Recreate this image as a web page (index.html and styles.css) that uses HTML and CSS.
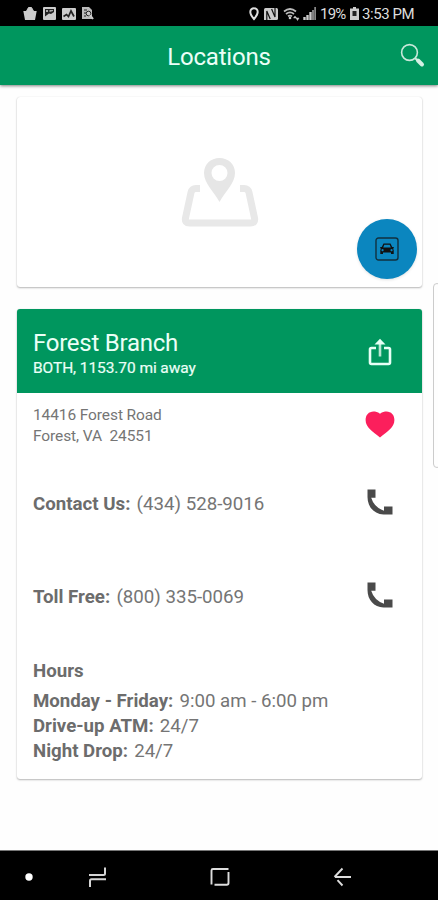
FILE: index.html
```html
<!DOCTYPE html>
<html lang="en">
<head>
<meta charset="utf-8">
<title>Locations</title>
<link rel="stylesheet" href="styles.css">
</head>
<body>
<div class="status">
  <div class="notices">
    <svg width="14" height="15" viewBox="0 0 14 15"><path d="M.3 5h13.400L12 14H2z" fill="#ccc"/><path d="M3 6l2.500-4.500h3L11 6" fill="#ccc" stroke="#ccc"/></svg>
    <svg width="13" height="13" viewBox="0 0 13 13"><rect width="13" height="13" rx="1" fill="#ccc"/><path d="M2 2v7.500l4-3 2 .5 3-2V2z" fill="#222"/><path d="M3 3h2v2H3zM6.500 3H10v1L6.500 5z" fill="#aaa"/></svg>
    <svg width="14" height="12" viewBox="0 0 14 12"><rect width="14" height="12" rx="1" fill="#ccc"/><path d="M1.500 8.500l3-2 2 2L9 3l3 5.500" fill="none" stroke="#222" stroke-width="1.700"/></svg>
    <svg width="12" height="13" viewBox="0 0 12 13"><path d="M0 0h7l3 3v9H0z" fill="#bbb"/><path d="M2 3h3M2 6h2M2 9h2" stroke="#222"/><circle cx="6.500" cy="6.500" r="2.300" fill="#ccc" stroke="#222"/><path d="M8 8l3 4" stroke="#ccc" stroke-width="2"/></svg>
  </div>
  <div class="signals">
    <svg class="s-pin" width="10" height="14" viewBox="0 0 10 14"><path d="M5 1.200a3.700 3.700 0 0 0-3.700 3.700C1.300 7.500 5 12 5 12s3.700-4.500 3.700-7.100A3.700 3.700 0 0 0 5 1.200z" fill="none" stroke="#ddd" stroke-width="2"/></svg>
    <svg class="s-nfc" width="14" height="12" viewBox="0 0 14 12"><path d="M0 12V1.500Q0 0 1.500 0h11Q14 0 14 1.500v9q0 1.500-1.500 1.500z" fill="#ccc"/><path d="M2.800 12V3l3.400 8M11 0v9L7.600 1" fill="none" stroke="#111" stroke-width="1.200"/></svg>
    <svg class="s-wifi" width="17" height="14" viewBox="0 0 17 14"><path d="M1 4.500Q7 -.5 13 4.500M3 7Q7 3.700 11 7M5 9.300q2-1.500 4 0" fill="none" stroke="#bbb" stroke-width="1.700"/><circle cx="7" cy="11" r="1.300" fill="#ccc"/><path d="M10.500 11l1.500-2 1.500 2zM13 11l1.500 2.500L16 11z" fill="#ccc" stroke="#ccc" stroke-width=".5"/></svg>
    <svg class="s-cell" width="13" height="13" viewBox="0 0 13 13"><path d="M1.500 13v-3M4.500 13V8M7.500 13V5" stroke="#ccc" stroke-width="2.400"/><path d="M10 13V3M12.200 13V0" stroke="#888" stroke-width="1.900"/></svg>
    <span class="pct">19%</span>
    <svg class="s-bat" width="9" height="13" viewBox="0 0 9 13"><path d="M3 0h3v1.500h3V13H0V1.500h3z" fill="#ccc"/><path d="M2.500 4h4v5h-4z" fill="#222"/></svg>
    <span class="clock">3:53 PM</span>
  </div>
</div>
<header class="bar">
  <h1>Locations</h1>
  <svg class="search" width="26" height="26" viewBox="0 0 26 26"><circle cx="9.500" cy="9.500" r="7.900" fill="none" stroke="#c8e8da" stroke-width="1.600"/><path d="M15 15l3 3" stroke="#c8e8da" stroke-width="2"/><path d="M18 17.500l4 4" stroke="#d5f0e4" stroke-width="4" stroke-linecap="round"/></svg>
</header>
<main>
  <section class="map">
    <svg width="78" height="70" viewBox="0 0 78 70"><path fill-rule="evenodd" d="M38.500 1C29.500 1 23 7.500 23 16c0 10 9.500 18 15.500 29C44.500 34 54 26 54 16 54 7.500 47.500 1 38.500 1zm0 7a8 8 0 1 1 0 16 8 8 0 0 1 0-16z" fill="#e6e6e6"/><path d="M19 31.500h-4q-4 0-5 4L4.500 61q-1 5 4 5h61q5 0 4-5L68 35.500q-1-4-5-4h-4" fill="none" stroke="#e8e8e8" stroke-width="7"/></svg>
    <button class="fab" aria-label="Directions"><svg width="24" height="24" viewBox="0 0 24 24"><rect x="1" y="1" width="22" height="22" rx="2.500" fill="none" stroke="#12313f" stroke-width="1.400"/><path fill-rule="evenodd" d="M8.500 6.500h7l1.700 3.500h1.300l.5 1-1 .7.700 1.300v4h-2.700v-1.500H8V17H5.300v-4l.7-1.300-1-.7.500-1h1.300zM9.300 7.800L8.200 10.500h7.600l-1.100-2.700zM7.500 12a1.100 1.100 0 1 0 .1 0zm9 0a1.100 1.100 0 1 0 .1 0z" fill="#111"/></svg></button>
  </section>
  <section class="branch">
    <div class="head">
      <div><h2>Forest Branch</h2><p class="dist">BOTH, 1153.70 mi away</p></div>
      <svg width="24" height="29" viewBox="0 0 24 29"><path d="M8 10H3.500Q2 10 2 11.500v13Q2 26 3.500 26h17q1.500 0 1.500-1.500v-13Q22 10 20.500 10H16" fill="none" stroke="#e6fff5" stroke-width="2.600"/><path d="M12 18.500V5" stroke="#b9e6d3" stroke-width="2.600"/><path d="M6.500 6.500L12 .8l5.500 5.700z" fill="#e6fff5"/></svg>
    </div>
    <div class="addr">
      <p>14416 Forest Road<br>Forest, VA&nbsp; 24551</p>
      <svg width="30" height="28" viewBox="0 0 30 28"><path d="M15 2.800C12.500.8 10.500.5 8.500.5 3.800.5.600 4 .600 9c0 7.500 7 11.500 14.400 17.500C22.400 20.500 29.400 16.500 29.400 9c0-5-3.200-8.500-7.900-8.500-2 0-4 .3-6.500 2.300z" fill="#fb1f5c"/></svg>
    </div>
    <div class="phone">
      <p><b>Contact Us:</b> <span>(434) 528-9016</span></p>
      <svg width="26" height="26" viewBox="0 0 26 26"><path d="M.5.500h8v8.200H4.200Q7 18 17 21.800V17.500h8.500v8h-9C7 25 .5 18 .5 8z" fill="#4a4a4a"/></svg>
    </div>
    <div class="phone">
      <p><b>Toll Free:</b> <span>(800) 335-0069</span></p>
      <svg width="26" height="26" viewBox="0 0 26 26"><path d="M.5.500h8v8.200H4.200Q7 18 17 21.800V17.500h8.500v8h-9C7 25 .5 18 .5 8z" fill="#4a4a4a"/></svg>
    </div>
    <div class="hours">
      <h3>Hours</h3>
      <p><b>Monday - Friday:</b> <span>9:00 am - 6:00 pm</span></p>
      <p><b>Drive-up ATM:</b> <span>24/7</span></p>
      <p><b>Night Drop:</b> <span>24/7</span></p>
    </div>
  </section>
  <div class="edge"></div>
</main>
<nav>
  <svg class="n-dot" width="8" height="8" viewBox="0 0 8 8"><circle cx="4" cy="4" r="3.700" fill="#fff"/></svg>
  <svg class="n-recent" width="20" height="20" viewBox="0 0 20 20"><path d="M1 8h14.500q1.500 0 1.500-1.500V.5M18 12.300H3.500Q2 12.300 2 14v6" fill="none" stroke="#d5d5d5" stroke-width="2"/></svg>
  <svg class="n-home" width="20" height="20" viewBox="0 0 20 20"><path d="M1.500 17.500V3.500Q1.500 2 3 2h15.500M18.500 5v11q0 1.700-1.700 1.700H4.500" fill="none" stroke="#ddd" stroke-width="1.900"/></svg>
  <svg class="n-back" width="19" height="20" viewBox="0 0 19 20"><path d="M18 10H2M9.500 1.500L1.500 10M4.500 13.200l5 5.300" fill="none" stroke="#ddd" stroke-width="1.900"/></svg>
</nav>
</body>
</html>
```
FILE: styles.css
```css
* { box-sizing: border-box; }
body, h1, h2, h3, p { margin: 0; }
body {
  width: 438px;
  height: 900px;
  display: flex;
  flex-direction: column;
  overflow: hidden;
  background: #fefefe;
  font-family: Roboto, "Liberation Sans", sans-serif;
  color: #757575;
}
svg { display: block; flex: none; }
.status {
  height: 26px;
  flex: none;
  display: flex;
  justify-content: space-between;
  align-items: center;
  padding: 1px 24px 0 23px;
  background: #000;
  color: #ddd;
  font-size: 15px;
}
.notices, .signals { display: flex; align-items: center; }
.notices { gap: 6px; }
.signals span { white-space: nowrap; }
.s-pin { margin-right: 1px; }
.s-nfc { margin-left: 4px; }
.s-wifi { margin-left: 5px; }
.s-cell { margin: 0 4px 0 3px; }
.s-bat { margin: 0 3px 0 5px; }
.pct { width: 25px; letter-spacing: -.8px; }
.clock { width: 52px; letter-spacing: -.45px; }
.bar {
  height: 59px;
  flex: none;
  display: grid;
  grid-template-columns: 50px 1fr 50px;
  align-items: center;
  background: #00965e;
  box-shadow: 0 1px 3px rgba(0,0,0,.5);
  color: #ebfff7;
}
.bar h1 { grid-column: 2; text-align: center; font-size: 24px; font-weight: 400; line-height: 30px; padding-top: 3px; letter-spacing: -.2px; }
.search { margin-left: 12px; }
main { flex: 1; position: relative; padding: 12px 16px 0 17px; }
.map, .branch { background: #fff; border-radius: 3px; box-shadow: 0 1px 2px rgba(0,0,0,.28), 0 0 1px rgba(0,0,0,.15); }
.map { height: 190px; position: relative; display: flex; justify-content: center; padding: 60px 0 0; }
.fab {
  position: absolute;
  right: 5px;
  bottom: 8px;
  width: 60px;
  height: 60px;
  padding: 0;
  border: 0;
  border-radius: 50%;
  background: #0b86bf;
  display: flex;
  align-items: center;
  justify-content: center;
  box-shadow: 0 1px 3px rgba(0,0,0,.12);
}
.branch { margin-top: 22px; height: 470px; overflow: hidden; }
.head { height: 84px; display: flex; justify-content: space-between; padding: 0 30px 0 16px; background: #00965e; color: #ebfff7; }
.head svg { margin-top: 29px; }
h2 { font-size: 24px; font-weight: 400; line-height: 30px; padding-top: 19px; letter-spacing: -.25px; }
.dist { font-size: 15.500px; line-height: 20px; font-weight: 400; letter-spacing: -.08px; -webkit-text-stroke: .2px; }
.addr { height: 86px; display: flex; justify-content: space-between; padding: 12px 27px 0 16px; font-size: 15.500px; line-height: 21px; letter-spacing: -.1px; }
.addr svg { margin-top: 6px; }
.phone { height: 93px; display: flex; justify-content: space-between; align-items: flex-start; padding: 10px 29px 0 16px; font-size: 18.700px; line-height: 30px; }
.phone span, .hours span { margin-left: 1.500px; }
b, h3 { font-weight: 700; color: #6c6c6c; }
.hours { padding: 0 16px; font-size: 18.650px; line-height: 25px; }
h3 { font-size: 18.700px; line-height: 25px; margin: -6px 0 5px; }
.edge { position: absolute; left: 433px; top: 198px; width: 8px; height: 185px; border: 1px solid #ccc; border-radius: 6px; background: #fefefe; }
nav { height: 50px; flex: none; display: flex; align-items: center; padding: 2px 0 0 25px; background: #000; border-top: 1px solid #777; }
.n-recent { margin-left: 55px; }
.n-home { margin-left: 102px; }
.n-back { margin-left: 103px; }
```
